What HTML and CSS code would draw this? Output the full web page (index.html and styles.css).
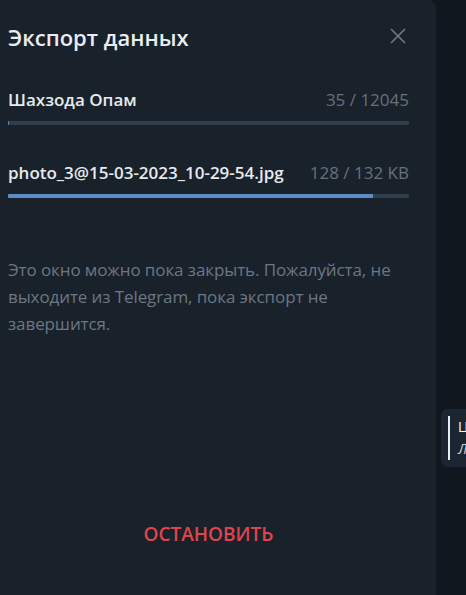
FILE: index.html
```html
<!DOCTYPE html>
<html lang="ru">
<head>
<meta charset="utf-8">
<link rel="stylesheet" href="styles.css">
</head>
<body>
<div class="layout">
  <div class="panel">
    <div class="header">
      <div class="title">Экспорт данных</div>
      <svg class="close" width="16" height="16" viewBox="0 0 16 16">
        <path d="M1 1 L15 15 M15 1 L1 15" stroke="#6e7a85" stroke-width="1.6" fill="none"/>
      </svg>
    </div>
    <div class="item first">
      <div class="row"><span class="name">Шахзода Опам</span><span class="count">35 / 12045</span></div>
      <div class="bar"><div class="fill" style="width:0.3%"></div></div>
    </div>
    <div class="item second">
      <div class="row"><span class="name">photo_3@15-03-2023_10-29-54.jpg</span><span class="count">128 / 132 KB</span></div>
      <div class="bar"><div class="fill" style="width:91%"></div></div>
    </div>
    <p class="desc">Это окно можно пока закрыть. Пожалуйста, не выходите из Telegram, пока экспорт не завершится.</p>
    <div class="stop">ОСТАНОВИТЬ</div>
  </div>
  <div class="chat">
    <div class="bubble">
      <div class="quote">
        <div class="qname">Ц</div>
        <div class="qtext">Л</div>
      </div>
    </div>
  </div>
</div>
</body>
</html>
```
FILE: styles.css
```css
html, body {
  margin: 0;
  padding: 0;
  background: #10171f;
  font-family: "Open Sans", "Noto Sans", sans-serif;
  overflow: hidden;
}
.layout {
  display: flex;
  width: 466px;
  height: 595px;
}
.panel {
  width: 436px;
  flex: none;
  height: 595px;
  background: #19212b;
  border-top-right-radius: 8px;
  padding: 0 27px 0 8px;
  box-sizing: border-box;
  display: flex;
  flex-direction: column;
}
.header {
  height: 74px;
  display: flex;
  align-items: center;
  justify-content: space-between;
}
.title {
  font-size: 22px;
  font-weight: 600;
  color: #e9edf1;
}
.close {
  margin-right: 3px;
  margin-top: -2px;
}
.item.first { margin-top: 16px; }
.item.second { margin-top: 38px; }
.row {
  display: flex;
  justify-content: space-between;
  align-items: center;
  height: 20px;
  line-height: 20px;
}
.name {
  font-size: 17px;
  font-weight: 600;
  color: #e6eaee;
}
.count {
  font-size: 17px;
  color: #66717c;
}
.bar {
  margin-top: 11px;
  height: 4px;
  background: #323e4b;
  border-radius: 1px;
  overflow: hidden;
}
.fill {
  height: 100%;
  background: #5b8cc4;
}
.desc {
  margin: 58px 0 0;
  font-size: 17px;
  line-height: 27px;
  color: #6b7783;
  letter-spacing: -0.1px;
}
.stop {
  margin-top: 187px;
  text-align: center;
  font-size: 19px;
  font-weight: 600;
  line-height: 20px;
  color: #e2444c;
}
.chat {
  flex: 1;
  min-width: 0;
  padding-top: 409px;
  padding-left: 5px;
}
.bubble {
  height: 58px;
  background: #1c2632;
  border-radius: 7px 0 0 7px;
  box-sizing: border-box;
  padding: 7px 0 0 7px;
  overflow: hidden;
}
.quote {
  border-left: 2px solid #e8edf2;
  padding-left: 8px;
  height: 44px;
  font-size: 14px;
  line-height: 22px;
}
.qname { color: #ffffff; }
.qtext { color: #c9d1d9; font-style: italic; }
```
